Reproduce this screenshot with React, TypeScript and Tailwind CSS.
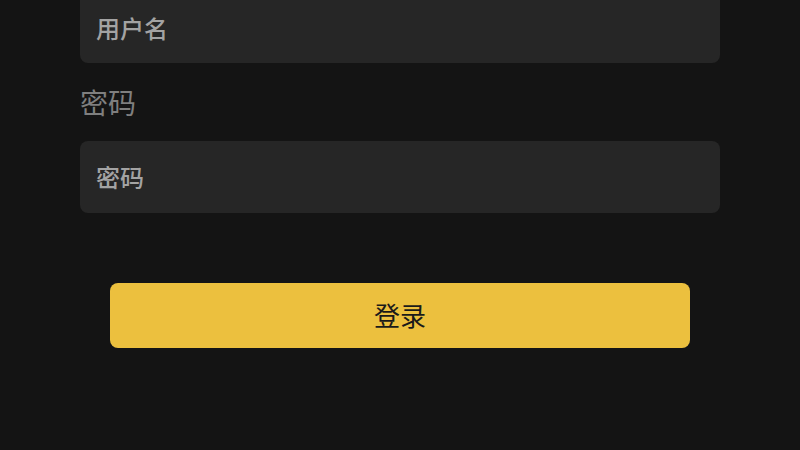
export default function App() {
  return (
    <div className="h-[450px] w-[800px] overflow-hidden bg-[#141414] font-['Liberation_Sans','Noto_Sans_CJK_SC',sans-serif]">
      {/* page is scrolled: the first field's top edge sits above the viewport */}
      <form className="mx-auto -mt-[9px] flex w-[640px] flex-col" onSubmit={(e) => e.preventDefault()}>
        <input
          type="text"
          placeholder="用户名"
          className="h-[72px] w-full rounded-lg bg-[#262626] px-4 pt-[5px] text-[24px] font-medium text-[#d4d4d4] outline-none placeholder:text-[#a3a3a3]"
        />
        <label className="mt-[22px] mb-[16px] h-[40px] text-[28px] leading-[40px] text-[#7f7f7f]">密码</label>
        <input
          type="password"
          placeholder="密码"
          className="h-[72px] w-full rounded-lg bg-[#262626] px-4 pt-[4px] text-[24px] font-medium text-[#d4d4d4] outline-none placeholder:text-[#a3a3a3]"
        />
        <button
          type="submit"
          className="mx-[30px] mt-[70px] h-[65px] rounded-lg bg-[#ecc03e] pt-[3px] text-[26px] text-[#1a1a1a]"
        >
          登录
        </button>
      </form>
    </div>
  );
}
